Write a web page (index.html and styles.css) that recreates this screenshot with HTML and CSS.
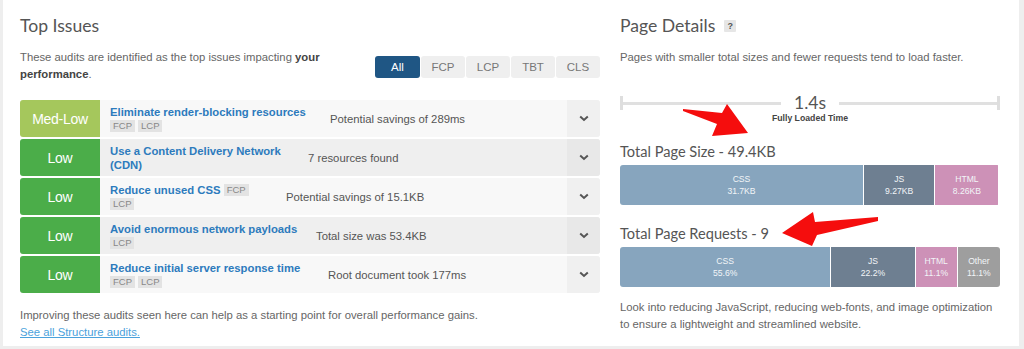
FILE: index.html
```html
<!DOCTYPE html>
<html>
<head>
<meta charset="utf-8">
<link rel="stylesheet" href="styles.css">
</head>
<body>
<div class="panel">
  <section class="col-left">
    <h2 class="heading">Top Issues</h2>
    <div class="intro">
      <p class="intro-text">These audits are identified as the top issues impacting <b>your</b> <b>performance</b>.</p>
      <div class="filters">
        <span class="filter filter--active">All</span>
        <span class="filter">FCP</span>
        <span class="filter">LCP</span>
        <span class="filter">TBT</span>
        <span class="filter">CLS</span>
      </div>
    </div>
    <div class="issues">
      <div class="issue issue--light">
        <div class="sev sev--medlow">Med-Low</div>
        <div class="info info--r1"><div><span class="title">Eliminate render-blocking resources</span> <span class="tag">FCP</span><span class="tag">LCP</span></div></div>
        <div class="detail">Potential savings of 289ms</div>
        <div class="chev"><svg width="10" height="7" viewBox="0 0 10 7"><polyline points="1.2,1.5 5,5 8.8,1.5" fill="none" stroke="#555" stroke-width="2"/></svg></div>
      </div>
      <div class="issue issue--dark">
        <div class="sev sev--low">Low</div>
        <div class="info info--r2"><div><span class="title">Use a Content Delivery Network (CDN)</span></div></div>
        <div class="detail">7 resources found</div>
        <div class="chev"><svg width="10" height="7" viewBox="0 0 10 7"><polyline points="1.2,1.5 5,5 8.8,1.5" fill="none" stroke="#555" stroke-width="2"/></svg></div>
      </div>
      <div class="issue issue--light">
        <div class="sev sev--low">Low</div>
        <div class="info info--r3"><div><span class="title">Reduce unused CSS</span> <span class="tag">FCP</span> <span class="tag">LCP</span></div></div>
        <div class="detail">Potential savings of 15.1KB</div>
        <div class="chev"><svg width="10" height="7" viewBox="0 0 10 7"><polyline points="1.2,1.5 5,5 8.8,1.5" fill="none" stroke="#555" stroke-width="2"/></svg></div>
      </div>
      <div class="issue issue--dark">
        <div class="sev sev--low">Low</div>
        <div class="info info--r4"><div><span class="title">Avoid enormous network payloads</span> <span class="tag">LCP</span></div></div>
        <div class="detail">Total size was 53.4KB</div>
        <div class="chev"><svg width="10" height="7" viewBox="0 0 10 7"><polyline points="1.2,1.5 5,5 8.8,1.5" fill="none" stroke="#555" stroke-width="2"/></svg></div>
      </div>
      <div class="issue issue--light">
        <div class="sev sev--low">Low</div>
        <div class="info info--r5"><div><span class="title">Reduce initial server response time</span> <span class="tag">FCP</span><span class="tag">LCP</span></div></div>
        <div class="detail">Root document took 177ms</div>
        <div class="chev"><svg width="10" height="7" viewBox="0 0 10 7"><polyline points="1.2,1.5 5,5 8.8,1.5" fill="none" stroke="#555" stroke-width="2"/></svg></div>
      </div>
    </div>
    <p class="foot">Improving these audits seen here can help as a starting point for overall performance gains.<br><a class="foot-link" href="#">See all Structure audits.</a></p>
  </section>

  <section class="col-right">
    <h2 class="heading">Page Details <span class="help">?</span></h2>
    <p class="lead">Pages with smaller total sizes and fewer requests tend to load faster.</p>
    <div class="timeline">
      <span class="cap"></span>
      <span class="line"></span>
      <span class="time">1.4s</span>
      <span class="line"></span>
      <span class="cap"></span>
    </div>
    <div class="time-label">Fully Loaded Time</div>

    <h3 class="sub">Total Page Size - 49.4KB</h3>
    <div class="bar">
      <div class="seg seg--css" style="width:64.2%">CSS<br>31.7KB</div>
      <div class="seg seg--js" style="width:18.8%">JS<br>9.27KB</div>
      <div class="seg seg--html" style="width:16.6%">HTML<br>8.26KB</div>
    </div>

    <h3 class="sub sub--req">Total Page Requests - 9</h3>
    <div class="bar">
      <div class="seg seg--css" style="width:55.6%">CSS<br>55.6%</div>
      <div class="seg seg--js" style="width:22.2%">JS<br>22.2%</div>
      <div class="seg seg--html" style="width:11.1%">HTML<br>11.1%</div>
      <div class="seg seg--other" style="width:11.1%">Other<br>11.1%</div>
    </div>

    <p class="foot foot--right">Look into reducing JavaScript, reducing web-fonts, and image optimization to ensure a lightweight and streamlined website.</p>
  </section>

  <svg class="arrows" width="1024" height="349" viewBox="0 0 1024 349">
    <polygon points="683,109 722,113 727,104 748,133 712,136 717,124 683,111" fill="#f50d0d"/>
    <polygon points="878,217 815,222 813,212 782,233 812,246 817,235 878,221" fill="#f50d0d"/>
  </svg>
</div>
</body>
</html>
```

FILE: styles.css
```css
html, body {
  margin: 0;
  padding: 0;
}
body {
  background: #eeeeee;
  font-family: "Liberation Sans", Arial, sans-serif;
  font-size: 11.3px;
  color: #666;
  overflow: hidden;
  width: 1024px;
  height: 349px;
}
.panel {
  position: relative;
  margin-left: 3px;
  width: 1016px;
  height: 346px;
  background: #fff;
  box-sizing: border-box;
  padding: 15px 0 0 17px;
  display: flex;
  gap: 20px;
}
.col-left {
  width: 580px;
  display: flex;
  flex-direction: column;
}
.col-right {
  width: 380px;
  display: flex;
  flex-direction: column;
}
.heading {
  margin: 0;
  font-family: Lato, "Liberation Sans", sans-serif;
  font-weight: 400;
  font-size: 17.6px;
  line-height: 22px;
  color: #555;
  display: flex;
  align-items: center;
}
.intro {
  margin-top: 12px;
  display: flex;
  align-items: center;
  gap: 20px;
}
.intro-text {
  margin: 0;
  width: 335px;
  line-height: 17px;
}
.intro-text b {
  color: #444;
}
.filters {
  display: flex;
  gap: 1px;
  margin-top: 1px;
}
.filter {
  width: 44px;
  height: 22px;
  line-height: 22px;
  text-align: center;
  background: #efefef;
  color: #777;
  font-size: 11.5px;
  border-radius: 3px;
}
.filter--active {
  width: 45px;
  background: #1f5684;
  color: #fff;
}
.issues {
  margin-top: 17px;
  display: flex;
  flex-direction: column;
  gap: 2px;
}
.issue {
  height: 37px;
  display: flex;
  align-items: stretch;
  border-radius: 3px;
}
.issue--light { background: #f8f8f8; }
.issue--dark { background: #efefef; }
.sev {
  width: 80px;
  flex: none;
  display: flex;
  align-items: center;
  justify-content: center;
  color: #fff;
  font-size: 14px;
  letter-spacing: -0.3px;
  border-radius: 3px 0 0 3px;
}
.sev--medlow { background: #a5c75c; }
.sev--low { background: #4bad49; }
.info {
  flex: none;
  box-sizing: content-box;
  padding-left: 10px;
  line-height: 14px;
  display: flex;
  align-items: center;
}
.info--r1 { width: 204px; }
.info--r2 { width: 182px; }
.info--r3 { width: 160px; }
.info--r4 { width: 190px; }
.info--r5 { width: 202px; }
.title {
  color: #2d7bbd;
  font-weight: bold;
}
.tag {
  display: inline-block;
  background: #e3e3e3;
  color: #888;
  font-size: 9.5px;
  line-height: 12px;
  padding: 0 3px;
  margin: 1px 3px 0 0;
  vertical-align: top;
}
.detail {
  flex: 1;
  padding-left: 16px;
  display: flex;
  align-items: center;
  color: #555;
}
.chev {
  width: 33px;
  flex: none;
  display: flex;
  align-items: center;
  justify-content: center;
  border-radius: 0 3px 3px 0;
}
.issue--light .chev { background: #f0f0f0; }
.issue--dark .chev { background: #e8e8e8; }
.foot {
  margin: 14px 0 0;
  line-height: 17px;
}
.foot-link {
  color: #4ba2dc;
  text-decoration: underline;
}
.help {
  display: inline-block;
  margin-left: 9px;
  width: 12px;
  height: 12px;
  line-height: 12px;
  text-align: center;
  background: #e6e6e6;
  color: #555;
  font-family: "Liberation Sans", sans-serif;
  font-weight: bold;
  font-size: 9px;
  border-radius: 1px;
}
.lead {
  margin: 12px 0 0;
  line-height: 17px;
}
.timeline {
  margin-top: 29px;
  height: 16px;
  display: flex;
  align-items: center;
}
.cap {
  width: 3px;
  height: 14px;
  background: #dedede;
  flex: none;
}
.line {
  flex: 1;
  height: 3px;
  background: #e0e0e0;
}
.time {
  padding: 0 13px;
  font-family: Lato, "Liberation Sans", sans-serif;
  font-size: 17.5px;
  color: #555;
  line-height: 16px;
}
.time-label {
  margin-top: 2px;
  text-align: center;
  font-weight: bold;
  font-size: 8.7px;
  color: #444;
  line-height: 11px;
}
.sub {
  margin: 19px 0 0;
  font-family: Lato, "Liberation Sans", sans-serif;
  font-weight: 400;
  font-size: 14.6px;
  line-height: 18px;
  color: #555;
}
.sub--req {
  margin-top: 20px;
}
.bar {
  margin-top: 4px;
  height: 40px;
  display: flex;
  border-radius: 3px;
  overflow: hidden;
}
.seg {
  box-sizing: border-box;
  border-right: 1px solid #fff;
  display: flex;
  align-items: center;
  justify-content: center;
  text-align: center;
  color: #f2f5f8;
  font-size: 8.6px;
  line-height: 12.5px;
}
.seg:last-child {
  border-right: none;
}
.seg--css { background: #87a5be; }
.seg--js { background: #6e7f91; }
.seg--html { background: #cd91b7; }
.seg--other { background: #9e9e9e; }
.foot--right {
  margin-top: 12px;
}
.arrows {
  position: absolute;
  left: -3px;
  top: 0;
  pointer-events: none;
}
```
